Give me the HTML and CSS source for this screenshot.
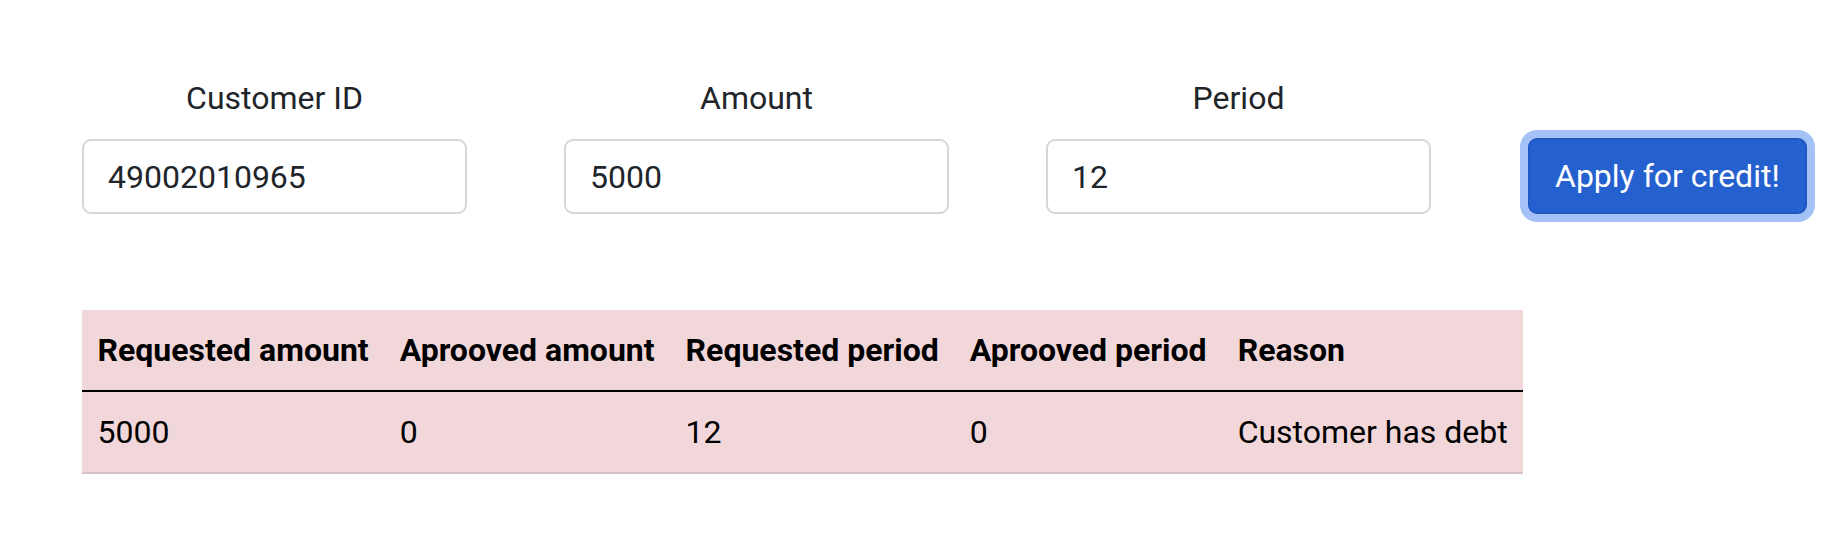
FILE: index.html
```html
<!DOCTYPE html>
<html lang="en">
<head>
<meta charset="utf-8">
<title>Apply for credit</title>
<link rel="stylesheet" href="styles.css">
</head>
<body>
<main class="page">
  <form class="credit-form">
    <div class="field">
      <label class="field-label" for="cid">Customer ID</label>
      <input class="field-input" id="cid" type="text" value="49002010965">
    </div>
    <div class="field">
      <label class="field-label" for="amount">Amount</label>
      <input class="field-input" id="amount" type="text" value="5000">
    </div>
    <div class="field">
      <label class="field-label" for="period">Period</label>
      <input class="field-input" id="period" type="text" value="12">
    </div>
    <div class="action">
      <button class="apply-btn" type="button">Apply for credit!</button>
    </div>
  </form>

  <table class="result-table">
    <thead>
      <tr>
        <th>Requested amount</th>
        <th>Aprooved amount</th>
        <th>Requested period</th>
        <th>Aprooved period</th>
        <th>Reason</th>
      </tr>
    </thead>
    <tbody>
      <tr>
        <td>5000</td>
        <td>0</td>
        <td>12</td>
        <td>0</td>
        <td>Customer has debt</td>
      </tr>
    </tbody>
  </table>
</main>
</body>
</html>
```

FILE: styles.css
```css
* {
  box-sizing: border-box;
}

html, body {
  margin: 0;
  padding: 0;
  background: #ffffff;
}

body {
  font-family: Roboto, "Liberation Sans", Arial, sans-serif;
  color: #212529;
}

.page {
  padding: 75px 0 0 82px;
}

.credit-form {
  display: flex;
  align-items: flex-end;
  gap: 97px;
}

.field {
  display: flex;
  flex-direction: column;
  width: 385px;
}

.field-label {
  display: block;
  text-align: center;
  font-size: 32px;
  line-height: 47px;
  margin-bottom: 17px;
  color: #212529;
}

.field-input {
  display: block;
  width: 385px;
  height: 75px;
  padding: 0 24px;
  font-family: Roboto, "Liberation Sans", Arial, sans-serif;
  font-size: 32px;
  color: #212529;
  background: #ffffff;
  border: 2px solid #d3d7db;
  border-radius: 9px;
  outline: none;
}

.action {
  display: flex;
  align-items: flex-end;
}

.apply-btn {
  height: 76px;
  padding: 0 25px;
  font-family: Roboto, "Liberation Sans", Arial, sans-serif;
  font-size: 32px;
  color: #ffffff;
  background: #2461cf;
  border: 2px solid #1f58c2;
  border-radius: 9px;
  box-shadow: 0 0 0 8px #a4c2f7;
  cursor: pointer;
}

.result-table {
  margin-top: 96px;
  border-collapse: collapse;
  background: #f2d7da;
  color: #000000;
  font-size: 32px;
  line-height: 48px;
}

.result-table th,
.result-table td {
  padding: 16px 15.5px;
  text-align: left;
  white-space: nowrap;
}

.result-table th {
  font-weight: 700;
  border-bottom: 2px solid #000000;
}

.result-table td {
  font-weight: 400;
  border-bottom: 2px solid #d9c2c5;
}
```
